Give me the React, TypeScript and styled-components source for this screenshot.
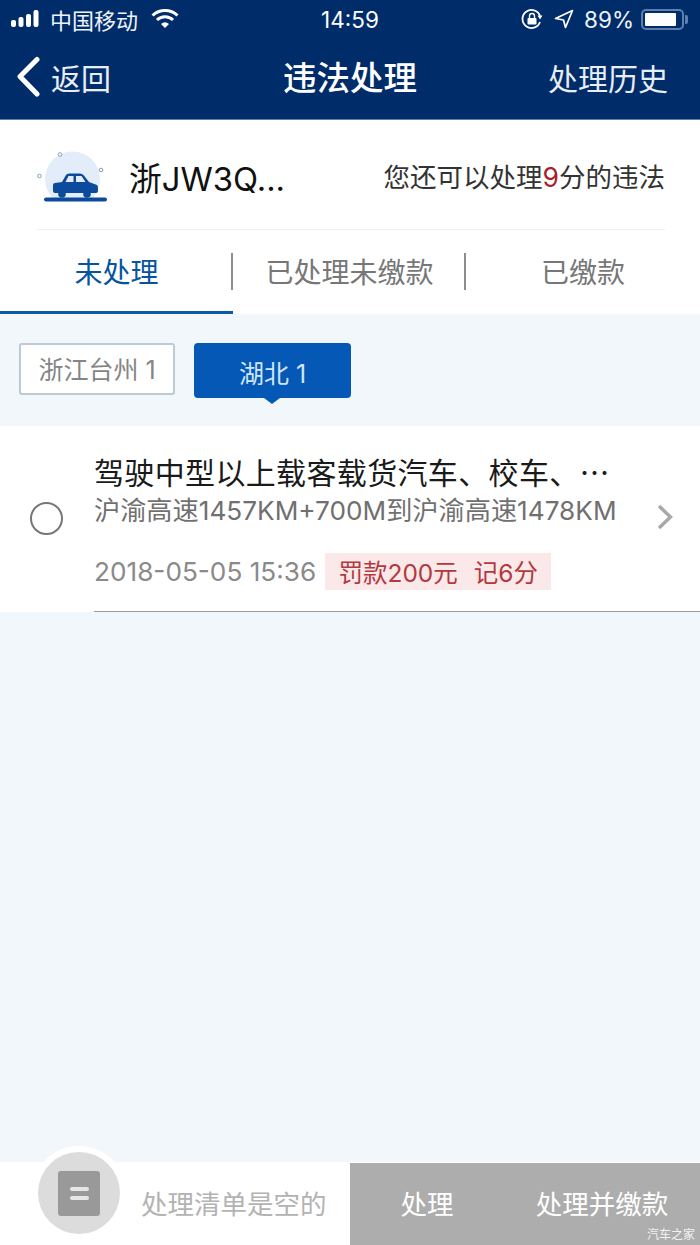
import React, { FC } from 'react';
import styled, { createGlobalStyle } from 'styled-components';

const GlobalStyle = createGlobalStyle`
  html, body {
    margin: 0;
    padding: 0;
    background: #f2f7fc;
    font-family: Inter, "Noto Sans CJK SC", sans-serif;
  }
  * { box-sizing: border-box; }
`;

const Page = styled.div`
  width: 700px;
  height: 1245px;
  display: flex;
  flex-direction: column;
  overflow: hidden;
  position: relative;
  background: #f2f7fc;
`;

const Header = styled.header`
  height: 120px;
  flex: none;
  background: #012c6a;
  color: #fff;
  border-bottom: 1px solid #5d7ea8;
`;

const StatusBar = styled.div`
  height: 38px;
  padding: 0 16px 0 11px;
  display: flex;
  align-items: center;
  justify-content: space-between;
  font-size: 23px;
  position: relative;
`;

const StatusGroup = styled.div`
  display: flex;
  align-items: center;
`;

const Carrier = styled.span`
  margin-left: 6px;
  font-size: 22px;
  color: #eef3f9;
`;

const Clock = styled.span`
  position: absolute;
  left: 0;
  right: 0;
  text-align: center;
  font-size: 22.5px;
  pointer-events: none;
`;

const Percent = styled.span`
  font-size: 22.5px;
  margin-left: 10px;
  color: #eef3f9;
`;

const Battery = styled.div`
  width: 43px;
  height: 21px;
  margin-left: 7px;
  border: 2px solid #5e80ad;
  border-radius: 5px;
  padding: 2px;
  position: relative;
  &::before {
    content: '';
    display: block;
    width: 89%;
    height: 100%;
    background: #fff;
    border-radius: 1px;
  }
  &::after {
    content: '';
    position: absolute;
    right: -6px;
    top: 4px;
    width: 3px;
    height: 9px;
    background: #5e80ad;
    border-radius: 0 2px 2px 0;
  }
`;

const NavBar = styled.div`
  height: 81px;
  padding: 0 32px 4px 16px;
  display: flex;
  align-items: center;
  justify-content: space-between;
  position: relative;
`;

const BackLink = styled.div`
  display: flex;
  align-items: center;
  gap: 11px;
  font-size: 30px;
  color: #e8eef6;
`;

const NavTitle = styled.div`
  position: absolute;
  left: 0;
  right: 0;
  text-align: center;
  font-size: 33.5px;
  font-weight: 500;
  padding-bottom: 2px;
`;

const NavAction = styled.div`
  font-size: 30px;
  color: #e8eef6;
`;

const Summary = styled.section`
  flex: none;
  background: #fff;
  height: 194px;
  display: flex;
  flex-direction: column;
`;

const CarRow = styled.div`
  height: 110px;
  margin: 0 35px 0 37px;
  border-bottom: 1px solid #eef0f2;
  display: flex;
  align-items: center;
  padding-top: 1px;
`;

const Plate = styled.div`
  margin: 2px 0 0 20px;
  font-size: 32.8px;
  color: #111;
`;

const Quota = styled.div`
  margin-left: auto;
  font-size: 26.5px;
  color: #333;
`;

const QuotaNumber = styled.span`
  color: #a5212b;
`;

const Tabs = styled.div`
  flex: 1;
  display: grid;
  grid-template-columns: 233px 233px 234px;
`;

const Tab = styled.div<{ $active?: boolean; $divider?: boolean }>`
  display: flex;
  align-items: center;
  justify-content: center;
  padding-top: 1px;
  font-size: 28px;
  color: ${(p) => (p.$active ? '#05549f' : '#777')};
  border-bottom: 3px solid ${(p) => (p.$active ? '#0a58ab' : 'transparent')};
  position: relative;
  &::after {
    content: '';
    display: ${(p) => (p.$divider ? 'block' : 'none')};
    position: absolute;
    right: 0;
    top: 23px;
    width: 2px;
    height: 37px;
    background: #8d8d8d;
  }
`;

const Filters = styled.div`
  flex: none;
  height: 112px;
  padding: 29px 19px 0;
  display: flex;
  align-items: flex-start;
  gap: 19px;
`;

const Chip = styled.div`
  width: 156px;
  height: 52px;
  background: #fff;
  border: 2px solid #bdc9d6;
  border-radius: 3px;
  color: #858585;
  font-size: 25px;
  display: flex;
  align-items: center;
  justify-content: center;
  padding-bottom: 2px;
`;

const ActiveChip = styled.div`
  width: 157px;
  height: 55px;
  background: #0558b6;
  border-radius: 4px;
  color: #cfe6fb;
  font-size: 25px;
  display: flex;
  align-items: center;
  justify-content: center;
  padding-top: 3px;
  position: relative;
  &::after {
    content: '';
    position: absolute;
    left: 70px;
    bottom: -6px;
    border-left: 8px solid transparent;
    border-right: 8px solid transparent;
    border-top: 6px solid #0558b6;
  }
`;

const Record = styled.article`
  flex: none;
  height: 186px;
  background: #fff;
  display: flex;
  align-items: stretch;
`;

const RadioColumn = styled.div`
  width: 94px;
  flex: none;
  padding: 76px 0 0 30px;
`;

const Radio = styled.div`
  width: 33px;
  height: 33px;
  border: 2px solid #777;
  border-radius: 50%;
`;

const RecordBody = styled.div`
  flex: 1;
  min-width: 0;
  border-bottom: 1px solid #9a9a9a;
  padding-top: 26px;
  position: relative;
`;

const RecordTitle = styled.div`
  font-family: "Noto Sans CJK SC", sans-serif;
  font-size: 30px;
  letter-spacing: 0.35px;
  line-height: 38px;
  color: #1a1a1a;
  white-space: nowrap;
`;

const RecordPlace = styled.div`
  margin-top: 3px;
  font-size: 26.2px;
  line-height: 36px;
  color: #707070;
  white-space: nowrap;
`;

const RecordMeta = styled.div`
  margin-top: 24px;
  display: flex;
  align-items: center;
  gap: 9px;
`;

const RecordDate = styled.span`
  font-size: 26.2px;
  color: #8a8a8a;
`;

const Penalty = styled.span`
  height: 37px;
  width: 226px;
  background: #fbe8e9;
  color: #b3383f;
  font-size: 24.5px;
  display: flex;
  align-items: center;
  justify-content: center;
  gap: 16px;
`;

const Chevron = styled.div`
  position: absolute;
  right: 27px;
  top: 78px;
  line-height: 0;
`;

const Spacer = styled.div`
  flex: 1;
`;

const Footer = styled.footer`
  flex: none;
  height: 82px;
  display: flex;
  position: relative;
  box-shadow: 0 -1px 0 #fff;
`;

const BasketSide = styled.div`
  width: 350px;
  background: #fff;
  display: flex;
  align-items: center;
  padding: 0 0 3px 141px;
  font-size: 26.5px;
  color: #b3b3b3;
`;

const BasketHalo = styled.div`
  position: absolute;
  left: 32px;
  top: -17px;
  width: 94px;
  height: 94px;
  background: #fff;
  border-radius: 50%;
  display: flex;
  align-items: center;
  justify-content: center;
`;

const BasketCircle = styled.div`
  width: 82px;
  height: 82px;
  background: #dcdcdc;
  border-radius: 50%;
  display: flex;
  align-items: center;
  justify-content: center;
`;

const BasketIcon = styled.div`
  width: 42px;
  height: 45px;
  background: #999;
  border-radius: 3px;
  display: flex;
  flex-direction: column;
  justify-content: center;
  align-items: center;
  gap: 5px;
`;

const BasketLine = styled.span`
  width: 19px;
  height: 4px;
  border-radius: 2px;
  background: #e6e6e6;
`;

const ActionSide = styled.div`
  flex: 1;
  background: #adadad;
  display: grid;
  grid-template-columns: 154px 196px;
  color: #fff;
  font-size: 26.5px;
  padding-bottom: 3px;
`;

const Action = styled.div`
  display: flex;
  align-items: center;
  justify-content: center;
`;

const Watermark = styled.div`
  position: absolute;
  right: 5px;
  bottom: 3px;
  font-size: 12px;
  color: #f4f4f4;
`;

const SignalBars: FC = () => (
  <svg width="33" height="20" viewBox="0 0 33 20">
    <rect x="0" y="11" width="5" height="7" rx="2" fill="#fff" />
    <rect x="7.5" y="8" width="5" height="10" rx="2" fill="#fff" />
    <rect x="15" y="5" width="5" height="13" rx="2" fill="#fff" />
    <rect x="22.5" y="1" width="5" height="17" rx="2" fill="#fff" />
  </svg>
);

const WifiIcon: FC = () => (
  <svg width="28" height="20" viewBox="0 0 28 20" style={{ marginLeft: 13 }}>
    <path d="M1.5 6.5 A18 18 0 0 1 26.5 6.5" fill="none" stroke="#fff" strokeWidth="3" />
    <path d="M6 11 A11.5 11.5 0 0 1 22 11" fill="none" stroke="#fff" strokeWidth="3" />
    <path d="M10 15 Q14 11.5 18 15 L14 19 Z" fill="#fff" />
  </svg>
);

const RotationLock: FC = () => (
  <svg width="22" height="22" viewBox="0 0 22 22">
    <path d="M19 14 A9 9 0 1 1 19 8" fill="none" stroke="#fff" strokeWidth="1.8" />
    <path d="M16.5 7.5 L21.5 7.5 L19 11.5 Z" fill="#fff" />
    <rect x="6.5" y="10" width="9" height="6.5" rx="1" fill="#fff" />
    <path d="M8.5 10 V8 A2.5 2.5 0 0 1 13.5 8 V10" fill="none" stroke="#fff" strokeWidth="1.4" />
  </svg>
);

const LocationArrow: FC = () => (
  <svg width="20" height="20" viewBox="0 0 20 20" style={{ marginLeft: 11 }}>
    <path d="M18.5 1.5 L1.5 9.5 L9.5 11 L11.5 18.5 Z" fill="none" stroke="#fff" strokeWidth="1.7" strokeLinejoin="round" />
  </svg>
);

const BackArrow: FC = () => (
  <svg width="24" height="42" viewBox="0 0 24 42">
    <path d="M21 3.5 L4 20.5 L21 38" fill="none" stroke="#fff" strokeWidth="5" strokeLinecap="round" strokeLinejoin="round" />
  </svg>
);

const CarLogo: FC = () => (
  <svg width="72" height="60" viewBox="0 0 72 60" style={{ flex: 'none', marginTop: 8 }}>
    <circle cx="35.5" cy="30" r="27.5" fill="#e3edfa" />
    <rect x="0" y="49" width="72" height="11" fill="#fff" />
    <circle cx="23" cy="5.5" r="1.8" fill="#fff" stroke="#8b9db5" strokeWidth="1" />
    <circle cx="64" cy="21" r="1.8" fill="#fff" stroke="#8b9db5" strokeWidth="1" />
    <circle cx="2.5" cy="27" r="1.8" fill="#fff" stroke="#8b9db5" strokeWidth="1" />
    <path d="M25 33 L29 26 Q30 24.5 32 24.5 H43 Q45 24.5 46.5 26 L52 33 L60 36 Q61 37 61 39 V42 Q61 44 59 44 H18 Q16 44 16 42 V36 Q16 34 18 34 Z" fill="#0b4a9c" />
    <path d="M28.5 33 L31.5 27 H36.5 V33 Z M39 27 H44.5 L48.5 33 H39 Z" fill="#e3edfa" />
    <circle cx="25" cy="45" r="3.8" fill="#0b4a9c" />
    <circle cx="50" cy="45" r="3.8" fill="#0b4a9c" />
    <rect x="7" y="48.5" width="63" height="4" rx="2" fill="#0b4a9c" />
  </svg>
);

const ChevronIcon: FC = () => (
  <svg width="16" height="26" viewBox="0 0 16 26">
    <path d="M2 2 L13.5 13 L2 24" fill="none" stroke="#a9a9a9" strokeWidth="3.5" />
  </svg>
);

const App: FC = () => (
  <Page>
    <GlobalStyle />
    <Header>
      <StatusBar>
        <StatusGroup>
          <SignalBars />
          <Carrier>中国移动</Carrier>
          <WifiIcon />
        </StatusGroup>
        <Clock>14:59</Clock>
        <StatusGroup>
          <RotationLock />
          <LocationArrow />
          <Percent>89%</Percent>
          <Battery />
        </StatusGroup>
      </StatusBar>
      <NavBar>
        <BackLink>
          <BackArrow />
          返回
        </BackLink>
        <NavTitle>违法处理</NavTitle>
        <NavAction>处理历史</NavAction>
      </NavBar>
    </Header>
    <Summary>
      <CarRow>
        <CarLogo />
        <Plate>浙JW3Q...</Plate>
        <Quota>
          您还可以处理<QuotaNumber>9</QuotaNumber>分的违法
        </Quota>
      </CarRow>
      <Tabs>
        <Tab $active $divider>未处理</Tab>
        <Tab $divider>已处理未缴款</Tab>
        <Tab>已缴款</Tab>
      </Tabs>
    </Summary>
    <Filters>
      <Chip>浙江台州 1</Chip>
      <ActiveChip>湖北 1</ActiveChip>
    </Filters>
    <Record>
      <RadioColumn>
        <Radio />
      </RadioColumn>
      <RecordBody>
        <RecordTitle>驾驶中型以上载客载货汽车、校车、…</RecordTitle>
        <RecordPlace>沪渝高速1457KM+700M到沪渝高速1478KM</RecordPlace>
        <RecordMeta>
          <RecordDate>2018-05-05 15:36</RecordDate>
          <Penalty>
            <span>罚款200元</span>
            <span>记6分</span>
          </Penalty>
        </RecordMeta>
        <Chevron>
          <ChevronIcon />
        </Chevron>
      </RecordBody>
    </Record>
    <Spacer />
    <Footer>
      <BasketSide>处理清单是空的</BasketSide>
      <BasketHalo>
        <BasketCircle>
          <BasketIcon>
            <BasketLine />
            <BasketLine />
          </BasketIcon>
        </BasketCircle>
      </BasketHalo>
      <ActionSide>
        <Action>处理</Action>
        <Action>处理并缴款</Action>
      </ActionSide>
      <Watermark>汽车之家</Watermark>
    </Footer>
  </Page>
);

export default App;
